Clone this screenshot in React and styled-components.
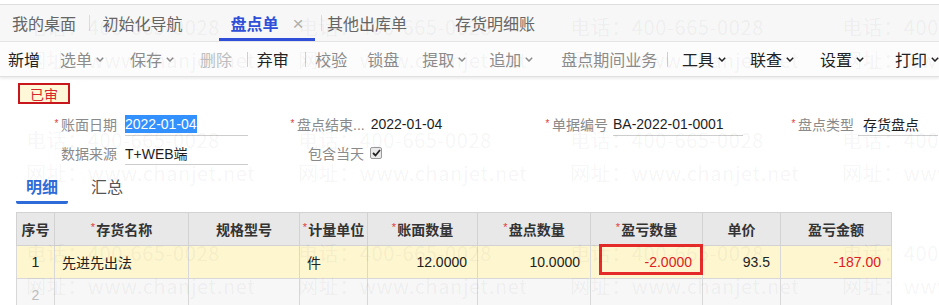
import React from 'react'
import styled, { createGlobalStyle } from 'styled-components'

const GlobalStyle = createGlobalStyle`
  html, body {
    margin: 0;
    padding: 0;
    background: #fff;
  }
  body {
    font-family: 'Liberation Sans', 'Noto Sans CJK SC', sans-serif;
  }
`

const Page = styled.div`
  position: relative;
  width: 939px;
  height: 305px;
  overflow: hidden;
  background: #fff;
  color: #222;
`

/* top tabs */
const TabBar = styled.div`
  display: flex;
  align-items: stretch;
  height: 36px;
  margin-top: 4px;
  border-top: 1px solid #dedede;
  border-bottom: 1px solid #e4e4e4;
  background: #f7f7f7;
`

const Tab = styled.div`
  box-sizing: border-box;
  width: ${p => p.$w}px;
  margin-left: ${p => p.$ml || 0}px;
  display: flex;
  align-items: center;
  justify-content: center;
  gap: 14px;
  padding-top: 3px;
  border-bottom: 3px solid ${p => (p.$active ? '#2f4fd9' : 'transparent')};
  font-size: 16px;
  white-space: nowrap;
  color: ${p => (p.$active ? '#2f4fd9' : '#666')};
  font-weight: ${p => (p.$active ? 700 : 400)};
`

const TabSep = styled.span`
  align-self: center;
  width: 1px;
  height: 16px;
  margin-left: ${p => p.$ml || 0}px;
  background: #dcdcdc;
`

const Close = styled.span`
  font-size: 19px;
  font-weight: 300;
  color: #b0b0b0;
  line-height: 1;
`

/* toolbar */
const Toolbar = styled.div`
  position: relative;
  z-index: 1;
  display: flex;
  align-items: center;
  height: 34px;
  padding-left: 8px;
  background: #fcfcfc;
  border-bottom: 1px solid #e0e0e0;
  box-shadow: 0 2px 2px rgba(0, 0, 0, 0.07);
`

const toneColor = {
  dark: '#222',
  muted: '#8c8c8c',
  off: '#c0c0c0',
}

const ToolItem = styled.span`
  display: inline-flex;
  align-items: center;
  gap: 4px;
  margin-left: ${p => p.$ml || 0}px;
  font-size: 16px;
  white-space: nowrap;
  color: ${p => toneColor[p.$tone || 'dark']};
`

const ToolSep = styled.span`
  width: 1px;
  height: 15px;
  margin-left: ${p => p.$ml || 0}px;
  background: #cfcfcf;
`

const Chevron = ({ color }) => (
  <svg width="8" height="5" viewBox="0 0 8 5">
    <polyline points="0.8,0.8 4,4 7.2,0.8" fill="none" stroke={color} strokeWidth="1.5" />
  </svg>
)

/* document header */
const Body = styled.div`
  padding-top: 6px;
`

const Badge = styled.div`
  box-sizing: border-box;
  width: 52px;
  height: 21px;
  margin-left: 18px;
  display: flex;
  align-items: center;
  justify-content: center;
  border: 2px solid #c8161d;
  background: #fff8d8;
  color: #d9262c;
  font-size: 14px;
`

const Form = styled.div`
  display: grid;
  grid-template-columns: 236px 255px 246px 1fr;
  grid-auto-rows: 24px;
  row-gap: 5px;
  margin-top: 8px;
  padding-left: 52px;
`

const Field = styled.div`
  display: flex;
  align-items: center;
  padding-left: ${p => p.$indent || 0}px;
  white-space: nowrap;
`

const Star = styled.span`
  width: 9px;
  flex: none;
  align-self: flex-start;
  padding-top: 6px;
  text-align: center;
  color: #e23b3b;
  font-size: 10px;
`

const Label = styled.span`
  font-size: 14px;
  color: #8a8a8a;
`

const Value = styled.div`
  box-sizing: border-box;
  align-self: stretch;
  display: flex;
  align-items: center;
  width: ${p => p.$w}px;
  margin-left: ${p => p.$gap ?? 8}px;
  padding-left: ${p => p.$pad || 0}px;
  border-bottom: 1px solid ${p => (p.$line ? '#cdcdcd' : 'transparent')};
  font-size: 14px;
  color: #1e1e1e;
`

const Selected = styled.span`
  line-height: 18px;
  background: #3390ff;
  color: #fff;
`

const Checkbox = styled.span`
  box-sizing: border-box;
  width: 12px;
  height: 12px;
  margin-left: 6px;
  display: inline-flex;
  align-items: center;
  justify-content: center;
  border: 1px solid #9a9a9a;
  border-radius: 2px;
  background: #e9e9e9;
`

/* detail tabs */
const DetailTabs = styled.div`
  display: flex;
  gap: 13px;
  height: 34px;
  margin: 5px 0 0 16px;
`

const DetailTab = styled.div`
  box-sizing: border-box;
  width: 52px;
  display: flex;
  align-items: center;
  justify-content: center;
  border-bottom: 3px solid ${p => (p.$active ? '#2f6bd8' : 'transparent')};
  border-radius: 0 0 2px 2px;
  font-size: 16px;
  font-weight: ${p => (p.$active ? 700 : 400)};
  color: ${p => (p.$active ? '#2f6bd8' : '#555')};
`

/* grid */
const Table = styled.table`
  width: 875px;
  margin: 8px 0 0 16px;
  border-collapse: collapse;
  table-layout: fixed;
  font-size: 14px;
`

const Th = styled.th`
  height: 32px;
  padding: 0;
  background: #e8e8e8;
  border: 1px solid #d2d2d2;
  font-weight: 700;
  color: #333;
  text-align: center;
  white-space: nowrap;
`

const Req = styled.span`
  color: #e23b3b;
  font-size: 11px;
  font-weight: 400;
  vertical-align: 4px;
  margin-right: 1px;
`

const Row = styled.tr`
  background: ${p => (p.$filled ? '#fdf6cf' : '#f7f7f7')};
`

const Td = styled.td`
  position: relative;
  height: 32px;
  padding: 0 ${p => (p.$align === 'right' ? 10 : 0)}px 0 ${p => (p.$align === 'left' ? 7 : 0)}px;
  border: 1px solid #d8d8d8;
  text-align: ${p => p.$align || 'center'};
  white-space: nowrap;
  color: ${p => (p.$red ? '#e0201f' : p.$faint ? '#bdbdbd' : '#222')};
`

const Flag = styled.span`
  position: absolute;
  top: -2px;
  bottom: 3px;
  left: 8px;
  right: -1px;
  border: 3px solid #e52a2a;
  pointer-events: none;
`

/* watermark */
const Watermark = styled.div`
  position: absolute;
  inset: 0;
  z-index: 2;
  display: grid;
  grid-template-columns: repeat(4, 272px);
  grid-auto-rows: 113px;
  padding: 10px 0 0 26px;
  pointer-events: none;
  font-family: 'Noto Sans CJK SC', sans-serif;
  font-size: 20px;
  line-height: 33px;
  letter-spacing: 0.6px;
  color: rgba(0, 0, 0, 0.05);
  white-space: nowrap;
`

const tabs = [
  { label: '我的桌面', w: 88 },
  { sep: true, ml: 1 },
  { label: '初始化导航', w: 105 },
  { label: '盘点单', w: 96, ml: 24, active: true },
  { sep: true, ml: 6 },
  { label: '其他出库单', w: 90 },
  { label: '存货明细账', w: 166 },
]

const tools = [
  { label: '新增', ml: 0 },
  { label: '选单', ml: 20, tone: 'muted', menu: true },
  { label: '保存', ml: 26, tone: 'muted', menu: true },
  { label: '删除', ml: 26, tone: 'off' },
  { sep: true, ml: 15 },
  { label: '弃审', ml: 9 },
  { sep: true, ml: 16 },
  { label: '校验', ml: 10, tone: 'muted' },
  { label: '锁盘', ml: 20, tone: 'muted' },
  { label: '提取', ml: 23, tone: 'muted', menu: true },
  { label: '追加', ml: 23, tone: 'muted', menu: true },
  { label: '盘点期间业务', ml: 28, tone: 'muted' },
  { sep: true, ml: 10 },
  { label: '工具', ml: 14, menu: true },
  { label: '联查', ml: 24, menu: true },
  { label: '设置', ml: 26, menu: true },
  { label: '打印', ml: 31, menu: true },
]

const columns = [
  { title: '序号', w: 38 },
  { title: '存货名称', w: 134, req: true },
  { title: '规格型号', w: 111 },
  { title: '计量单位', w: 68, req: true },
  { title: '账面数量', w: 110, req: true },
  { title: '盘点数量', w: 113, req: true },
  { title: '盈亏数量', w: 112, req: true },
  { title: '单价', w: 78 },
  { title: '盈亏金额', w: 111 },
]

export default function App() {
  return (
    <Page>
      <GlobalStyle />

      <TabBar>
        {tabs.map((t, i) =>
          t.sep ? (
            <TabSep key={i} $ml={t.ml} />
          ) : (
            <Tab key={i} $w={t.w} $ml={t.ml} $active={t.active}>
              {t.label}
              {t.active && <Close>×</Close>}
            </Tab>
          )
        )}
      </TabBar>

      <Toolbar>
        {tools.map((t, i) =>
          t.sep ? (
            <ToolSep key={i} $ml={t.ml} />
          ) : (
            <ToolItem key={i} $ml={t.ml} $tone={t.tone}>
              {t.label}
              {t.menu && <Chevron color={toneColor[t.tone || 'dark']} />}
            </ToolItem>
          )
        )}
      </Toolbar>

      <Body>
        <Badge>已审</Badge>

        <Form>
          <Field>
            <Star>*</Star>
            <Label>账面日期</Label>
            <Value $w={123} $line>
              <Selected>2022-01-04</Selected>
            </Value>
          </Field>
          <Field>
            <Star>*</Star>
            <Label>盘点结束...</Label>
            <Value $w={120} $gap={6}>2022-01-04</Value>
          </Field>
          <Field>
            <Star>*</Star>
            <Label>单据编号</Label>
            <Value $w={130} $gap={5} $line>BA-2022-01-0001</Value>
          </Field>
          <Field>
            <Star>*</Star>
            <Label>盘点类型</Label>
            <Value $w={80} $gap={4} $pad={5} $line>存货盘点</Value>
          </Field>

          <Field>
            <Star />
            <Label>数据来源</Label>
            <Value $w={123} $line>T+WEB端</Value>
          </Field>
          <Field $indent={11}>
            <Star />
            <Label>包含当天</Label>
            <Checkbox>
              <svg width="9" height="8" viewBox="0 0 9 8">
                <polyline points="1,4 3.5,6.5 8,1" fill="none" stroke="#222" strokeWidth="1.8" />
              </svg>
            </Checkbox>
          </Field>
        </Form>

        <DetailTabs>
          <DetailTab $active>明细</DetailTab>
          <DetailTab>汇总</DetailTab>
        </DetailTabs>

        <Table>
          <colgroup>
            {columns.map(c => (
              <col key={c.title} style={{ width: c.w }} />
            ))}
          </colgroup>
          <thead>
            <tr>
              {columns.map(c => (
                <Th key={c.title}>
                  {c.req && <Req>*</Req>}
                  {c.title}
                </Th>
              ))}
            </tr>
          </thead>
          <tbody>
            <Row $filled>
              <Td>1</Td>
              <Td $align="left">先进先出法</Td>
              <Td />
              <Td $align="left">件</Td>
              <Td $align="right">12.0000</Td>
              <Td $align="right">10.0000</Td>
              <Td $align="right" $red>
                -2.0000
                <Flag />
              </Td>
              <Td $align="right">93.5</Td>
              <Td $align="right" $red>-187.00</Td>
            </Row>
            <Row>
              <Td $faint>2</Td>
              <Td />
              <Td />
              <Td />
              <Td />
              <Td />
              <Td />
              <Td />
              <Td />
            </Row>
          </tbody>
        </Table>
      </Body>

      <Watermark>
        {Array.from({ length: 12 }, (_, i) => (
          <div key={i}>
            <div>电话：400-665-0028</div>
            <div>网址：www.chanjet.net</div>
          </div>
        ))}
      </Watermark>
    </Page>
  )
}
